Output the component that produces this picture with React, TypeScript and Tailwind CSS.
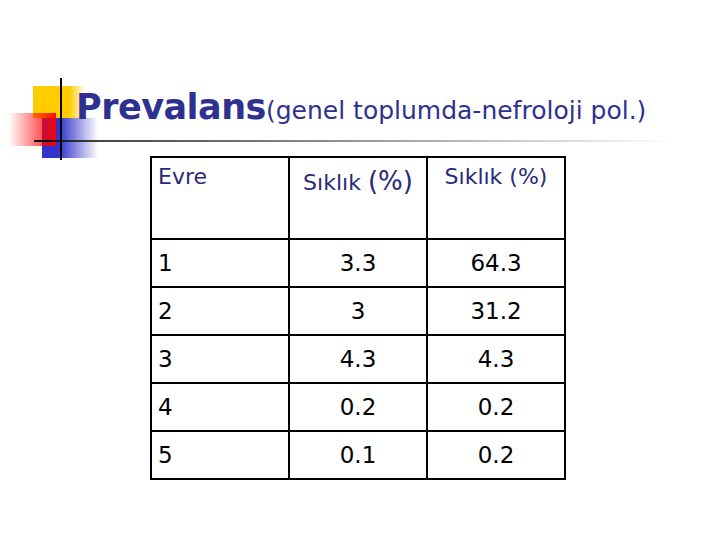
const rows = [
  ["1", "3.3", "64.3"],
  ["2", "3", "31.2"],
  ["3", "4.3", "4.3"],
  ["4", "0.2", "0.2"],
  ["5", "0.1", "0.2"],
]

function Ornament() {
  return (
    <svg className="absolute left-0 top-0" width="720" height="170" viewBox="0 0 720 170">
      <defs>
        <linearGradient id="yel" x1="0" x2="1" y1="0" y2="0">
          <stop offset="0" stopColor="#ffcc00" />
          <stop offset="0.7" stopColor="#ffcc00" />
          <stop offset="1" stopColor="#ffcc00" stopOpacity="0" />
        </linearGradient>
        <linearGradient id="blu" x1="0" x2="1" y1="0" y2="0">
          <stop offset="0" stopColor="#3333cc" />
          <stop offset="0.3" stopColor="#3333cc" />
          <stop offset="1" stopColor="#3333cc" stopOpacity="0" />
        </linearGradient>
        <linearGradient id="red" x1="0" x2="1" y1="0" y2="0">
          <stop offset="0" stopColor="#ff0000" stopOpacity="0.03" />
          <stop offset="1" stopColor="#ff0000" stopOpacity="0.95" />
        </linearGradient>
        <linearGradient id="rule" x1="0" x2="1" y1="0" y2="0">
          <stop offset="0" stopColor="#000000" />
          <stop offset="0.1" stopColor="#444444" />
          <stop offset="0.6" stopColor="#aaaaaa" />
          <stop offset="1" stopColor="#ffffff" />
        </linearGradient>
      </defs>
      <rect x="33" y="86" width="52" height="32" fill="url(#yel)" />
      <rect x="42" y="118" width="56" height="40" fill="url(#blu)" />
      <rect x="10" y="113" width="46" height="33" fill="url(#red)" />
      <rect x="34" y="140" width="640" height="2" fill="url(#rule)" />
      <rect x="60" y="78" width="2" height="82" fill="#000" />
    </svg>
  )
}

export default function App() {
  return (
    <div className="w-[720px] h-[540px] bg-white overflow-hidden font-['DejaVu_Sans',sans-serif]">
      <header className="relative h-[156px]">
        <Ornament />
        <h1 className="relative pl-[76px] pt-[90px] leading-none text-[#2e3192] whitespace-nowrap">
          <span className="text-[35px] font-bold tracking-[-0.5px]">Prevalans</span>
          <span className="text-[25px]">(genel toplumda-nefroloji pol.)</span>
        </h1>
      </header>

      <table className="ml-[150px] border-collapse border-2 border-black leading-none">
        <thead>
          <tr className="h-[82px] align-top text-[22px] text-[#2b2a78]">
            <th className="w-[138px] border-2 border-black pl-[6px] pt-[8px] text-left font-normal">Evre</th>
            <th className="w-[138px] border-2 border-black pt-[10px] text-center font-normal">
              Sıklık <span className="text-[26px]">(%)</span>
            </th>
            <th className="w-[138px] border-2 border-black pt-[8px] text-center font-normal">Sıklık (%)</th>
          </tr>
        </thead>
        <tbody className="text-[23px] text-black">
          {rows.map((r) => (
            <tr key={r[0]} className="h-[48px]">
              <td className="border-2 border-black pl-[6px]">{r[0]}</td>
              <td className="border-2 border-black text-center">{r[1]}</td>
              <td className="border-2 border-black text-center">{r[2]}</td>
            </tr>
          ))}
        </tbody>
      </table>
    </div>
  )
}
